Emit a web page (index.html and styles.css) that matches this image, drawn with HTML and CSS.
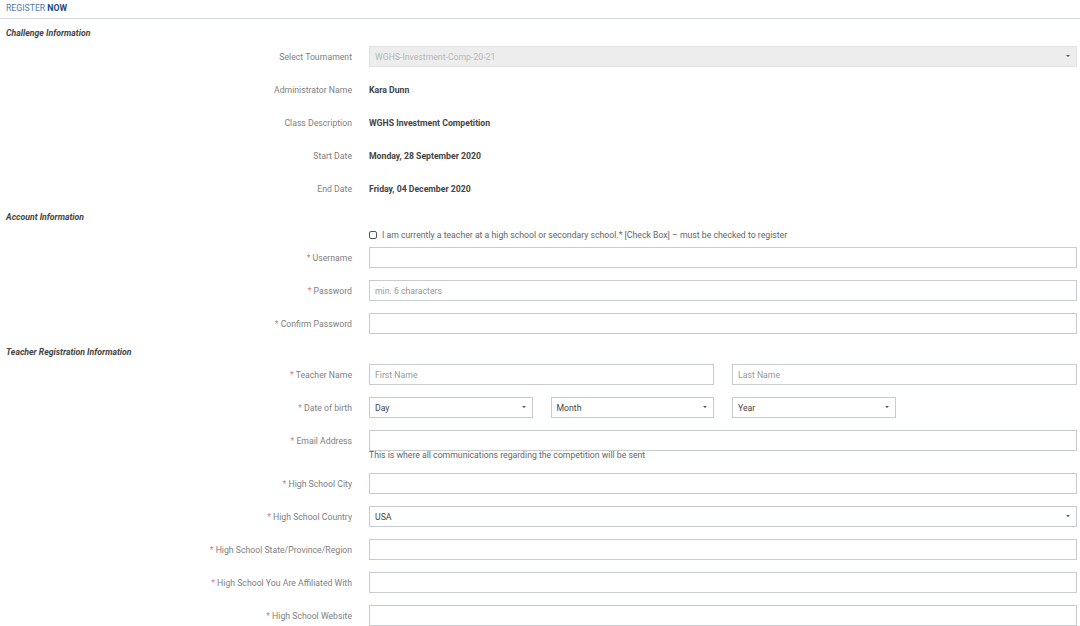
FILE: index.html
```
<!DOCTYPE html>
<html lang="en">
  <head>
    <meta charset="UTF-8" />
    <meta name="viewport" content="width=device-width, initial-scale=1.0" />
    <title>Register Now</title>
    <link rel="stylesheet" href="styles.css">
  </head>
  <body>
    <!-- header -->
    <div class="page-title">REGISTER <b>NOW</b></div>

    <form class="reg-form">
      <!-- challenge -->
      <h3 class="section-title first">Challenge Information</h3>
      <div class="row">
        <label class="lbl">Select Tournament</label>
        <div class="select-wrap">
          <select class="fld disabled" disabled>
            <option>WGHS-Investment-Comp-20-21</option>
          </select>
        </div>
      </div>
      <div class="row">
        <label class="lbl">Administrator Name</label>
        <div class="value">Kara Dunn</div>
      </div>
      <div class="row">
        <label class="lbl">Class Description</label>
        <div class="value">WGHS Investment Competition</div>
      </div>
      <div class="row">
        <label class="lbl">Start Date</label>
        <div class="value">Monday, 28 September 2020</div>
      </div>
      <div class="row">
        <label class="lbl">End Date</label>
        <div class="value">Friday, 04 December 2020</div>
      </div>

      <!-- account -->
      <h3 class="section-title">Account Information</h3>
      <div class="row check-row">
        <span></span>
        <label class="check-label">
          <input type="checkbox" class="chk" />
          I am currently a teacher at a high school or secondary school.* [Check Box] – must be checked to register
        </label>
      </div>
      <div class="row">
        <label class="lbl"><i>*</i> Username</label>
        <input class="fld" type="text" />
      </div>
      <div class="row">
        <label class="lbl"><i>*</i> Password</label>
        <input class="fld" type="password" placeholder="min. 6 characters" />
      </div>
      <div class="row">
        <label class="lbl"><i>*</i> Confirm Password</label>
        <input class="fld" type="password" />
      </div>

      <!-- teacher -->
      <h3 class="section-title">Teacher Registration Information</h3>
      <div class="row">
        <label class="lbl"><i>*</i> Teacher Name</label>
        <div class="cols">
          <input class="fld span2" type="text" placeholder="First Name" />
          <input class="fld span2" type="text" placeholder="Last Name" />
        </div>
      </div>
      <div class="row">
        <label class="lbl"><i>*</i> Date of birth</label>
        <div class="cols">
          <div class="select-wrap"><select class="fld"><option>Day</option></select></div>
          <div class="select-wrap"><select class="fld"><option>Month</option></select></div>
          <div class="select-wrap"><select class="fld"><option>Year</option></select></div>
        </div>
      </div>
      <div class="row with-help">
        <label class="lbl"><i>*</i> Email Address</label>
        <div>
          <input class="fld" type="email" />
          <div class="help">This is where all communications regarding the competition will be sent</div>
        </div>
      </div>
      <div class="row">
        <label class="lbl"><i>*</i> High School City</label>
        <input class="fld" type="text" />
      </div>
      <div class="row">
        <label class="lbl"><i>*</i> High School Country</label>
        <div class="select-wrap"><select class="fld"><option>USA</option></select></div>
      </div>
      <div class="row">
        <label class="lbl"><i>*</i> High School State/Province/Region</label>
        <input class="fld" type="text" />
      </div>
      <div class="row">
        <label class="lbl"><i>*</i> High School You Are Affiliated With</label>
        <input class="fld" type="text" />
      </div>
      <div class="row">
        <label class="lbl"><i>*</i> High School Website</label>
        <input class="fld" type="text" />
      </div>
    </form>
  </body>
</html>
```

FILE: styles.css
```
/* base */
body {
  font-family: Roboto, "Liberation Sans", Arial, sans-serif;
  font-size: 8.7px;
  color: #555;
  margin: 0;
  background: #fff;
  overflow: hidden;
}

.page-title {
  height: 18px;
  line-height: 16px;
  padding-left: 6px;
  color: #4f7aa8;
  border-bottom: 1px solid #d4d8dc;
}
.page-title b {
  color: #1c4a7c;
}

/* sections */
.section-title {
  margin: 0 0 6px 0;
  padding-left: 6px;
  line-height: 12px;
  font-size: 8.7px;
  font-weight: bold;
  font-style: italic;
  color: #444;
}
.section-title.first {
  margin-top: 8px;
  margin-bottom: 7px;
}

/* rows */
.row {
  display: grid;
  grid-template-columns: 352px 1fr;
  column-gap: 17px;
  padding-right: 3px;
  min-height: 21px;
  margin-bottom: 12px;
  align-items: center;
}
.row.check-row {
  min-height: 12px;
  margin-bottom: 6px;
}
.row.with-help {
  align-items: start;
  margin-bottom: 14px;
}
.row.with-help .lbl {
  line-height: 21px;
}

.lbl {
  text-align: right;
  color: #808080;
  padding-top: 1px;
}
.lbl i {
  font-style: normal;
  color: #d98080;
}

.value {
  font-weight: bold;
  color: #444;
}

/* fields */
.fld {
  box-sizing: border-box;
  width: 100%;
  height: 21px;
  margin: 0;
  padding: 0 5px;
  border: 1px solid #c9cccf;
  border-radius: 0;
  background: #fff;
  font-family: inherit;
  font-size: 8.7px;
  color: #444;
  outline: none;
}
.fld::placeholder {
  color: #999;
}
select.fld {
  appearance: none;
  -webkit-appearance: none;
}
.fld.disabled {
  background: #e6e6e6;
  color: #999;
  border-color: #d6d6d6;
}

.select-wrap {
  position: relative;
}
.select-wrap::after {
  content: "";
  position: absolute;
  right: 7px;
  top: 9px;
  border-left: 2px solid transparent;
  border-right: 2px solid transparent;
  border-top: 2px solid #555;
  pointer-events: none;
}

.cols {
  display: grid;
  grid-template-columns: repeat(4, 1fr);
  column-gap: 18px;
}
.cols .span2 {
  grid-column: span 2;
}

.help {
  line-height: 8px;
  color: #666;
}

/* checkbox */
.check-label {
  display: flex;
  align-items: center;
  color: #666;
  line-height: 12px;
}
.chk {
  appearance: none;
  -webkit-appearance: none;
  width: 8px;
  height: 8px;
  margin: 0 5px 0 0;
  border: 1px solid #555;
  border-radius: 2px;
  background: #fff;
}
```
